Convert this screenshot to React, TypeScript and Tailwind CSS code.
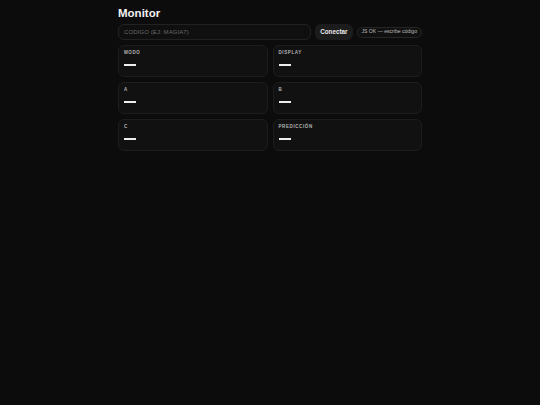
export default function App() {
  const fields = ["MODO", "DISPLAY", "A", "B", "C", "PREDICCIÓN"];
  return (
    <div
      className="min-h-screen w-full bg-[#0c0c0c] text-white"
      style={{ fontFamily: '"Liberation Sans", Arial, sans-serif' }}
    >
      <div className="mx-auto w-[304px] pt-[6px]">
        {/* Header */}
        <h1 className="text-[11.5px] font-bold leading-[14px] text-[#f2f2f2]">Monitor</h1>

        {/* Connect row */}
        <div className="mt-[4px] flex items-center gap-[4px]">
          <div className="flex h-[16px] flex-1 items-center rounded-[6px] border border-[#222] bg-[#0f0f0f] px-[5px]">
            <span className="text-[6px] tracking-[0.1px] text-[#6a6a6a]">CODIGO (EJ: MAGIA7)</span>
          </div>
          <button className="flex h-[16px] items-center rounded-[6px] bg-[#1c1c1c] px-[5px] text-[6.3px] font-bold text-[#ececec]">
            Conectar
          </button>
          <div className="flex h-[11px] items-center rounded-full border border-[#262626] bg-[#101010] px-[4px] text-[5.1px] text-[#bdbdbd]">
            JS OK — escribe código
          </div>
        </div>

        {/* Cards */}
        <div className="mt-[5px] grid grid-cols-2 gap-[5px]">
          {fields.map((f) => (
            <div
              key={f}
              className="h-[32px] rounded-[6px] border border-[#1d1d1d] bg-[#111111] px-[5px] pt-[4px]"
            >
              <div className="text-[4.5px] font-bold leading-[6px] tracking-[0.6px] text-[#b5b5b5]">{f}</div>
              <div className="mt-[8px] h-[1.5px] w-[12px] bg-[#eeeeee]" />
            </div>
          ))}
        </div>
      </div>
    </div>
  );
}
